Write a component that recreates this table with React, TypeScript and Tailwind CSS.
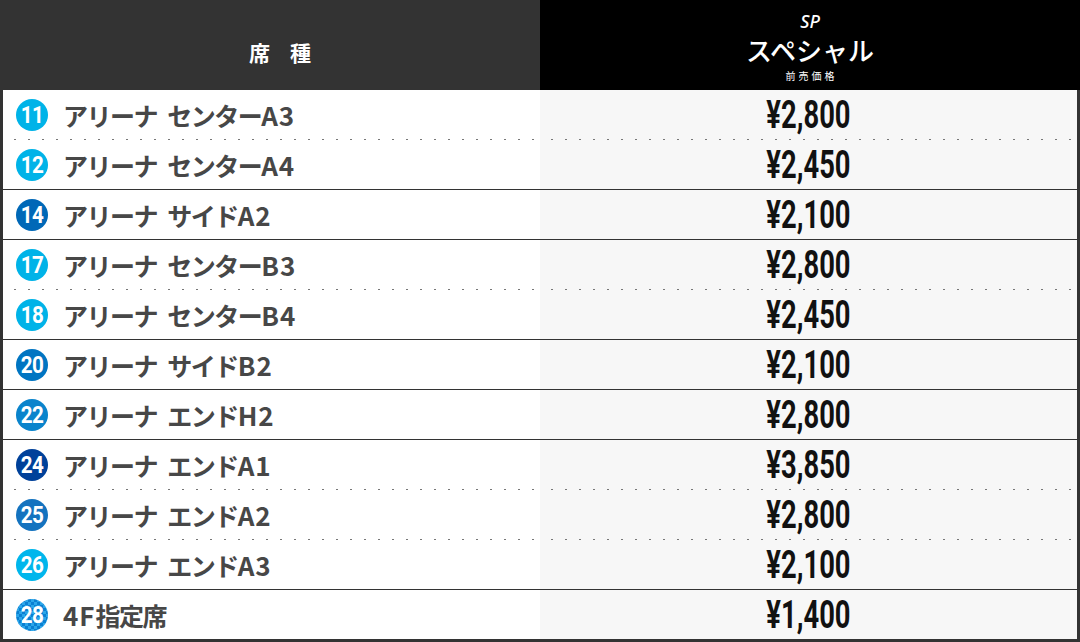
import React from 'react';

type Seat = {
  no: string;
  // [text, isLatin]
  name: [string, boolean][];
  price: string;
  color: string;
  // line drawn below this row
  sep: 'solid' | 'dotted' | 'none';
};

const seats: Seat[] = [
  { no: '11', name: [['アリーナ センター', false], ['A3', true]], price: '¥2,800', color: 'bg-[#00b3e8]', sep: 'dotted' },
  { no: '12', name: [['アリーナ センター', false], ['A4', true]], price: '¥2,450', color: 'bg-[#00b3e8]', sep: 'solid' },
  { no: '14', name: [['アリーナ サイド', false], ['A2', true]], price: '¥2,100', color: 'bg-[#0068b7]', sep: 'solid' },
  { no: '17', name: [['アリーナ センター', false], ['B3', true]], price: '¥2,800', color: 'bg-[#00b3e8]', sep: 'dotted' },
  { no: '18', name: [['アリーナ センター', false], ['B4', true]], price: '¥2,450', color: 'bg-[#00b3e8]', sep: 'solid' },
  { no: '20', name: [['アリーナ サイド', false], ['B2', true]], price: '¥2,100', color: 'bg-[#0075c2]', sep: 'solid' },
  { no: '22', name: [['アリーナ エンド', false], ['H2', true]], price: '¥2,800', color: 'bg-[#0a84cc]', sep: 'solid' },
  { no: '24', name: [['アリーナ エンド', false], ['A1', true]], price: '¥3,850', color: 'bg-[#00419a]', sep: 'dotted' },
  { no: '25', name: [['アリーナ エンド', false], ['A2', true]], price: '¥2,800', color: 'bg-[#1473bf]', sep: 'dotted' },
  { no: '26', name: [['アリーナ エンド', false], ['A3', true]], price: '¥2,100', color: 'bg-[#00b6ec]', sep: 'solid' },
  {
    no: '28',
    name: [['4F', true], ['指定席', false]],
    price: '¥1,400',
    color:
      'bg-[#0a80d2] bg-[conic-gradient(#2aa6ea_25%,#0a80d2_0_50%,#2aa6ea_0_75%,#0a80d2_0)] bg-[length:6px_6px]',
    sep: 'none',
  },
];

const jp = "font-['Noto_Sans_CJK_JP','Noto_Sans',sans-serif]";

function Badge({ no, color }: { no: string; color: string }) {
  return (
    <div className={`w-8 h-8 rounded-full flex items-center justify-center shrink-0 ${color}`}>
      <span className="inline-block text-white font-bold text-[24px] leading-none tracking-[-0.8px] scale-x-[0.86] font-['Roboto',sans-serif]">
        {no}
      </span>
    </div>
  );
}

function Separator({ kind }: { kind: Seat['sep'] }) {
  if (kind === 'none') return null;
  if (kind === 'solid') return <div className="h-px bg-[#333]" />;
  return (
    <div className="h-px flex">
      <div className="w-[537px] bg-white flex">
        <div className="ml-[11px] flex-1 bg-[linear-gradient(to_right,#777_2px,transparent_2px)] bg-[length:14px_1px]" />
      </div>
      <div className="flex-1 bg-[#f7f7f7] flex">
        <div className="mr-[4px] flex-1 bg-[linear-gradient(to_right,#777_2px,transparent_2px)] bg-[length:14px_1px] bg-[position:11px_0]" />
      </div>
    </div>
  );
}

export default function App() {
  return (
    <div className="w-[1080px] h-[642px] flex flex-col bg-[#333]">
      {/* Header */}
      <div className="h-[90px] flex shrink-0">
        <div className={`w-[540px] bg-[#333] flex items-center justify-center gap-5 pl-5 pt-[16px] ${jp} text-white font-bold text-[21px]`}>
          <span>席</span>
          <span>種</span>
        </div>
        <div className="flex-1 bg-black flex flex-col items-center pt-[10px]">
          <span className="text-white italic font-medium text-[18px] leading-[22px] font-['Noto_Sans',sans-serif]">
            SP
          </span>
          <span className={`${jp} text-white font-medium text-[26px] leading-[30px] mt-[3px]`}>
            スペシャル
          </span>
          <span className={`${jp} text-white text-[10px] leading-[12px] tracking-[0.3em] pl-[0.3em] mt-[5px]`}>
            前売価格
          </span>
        </div>
      </div>

      {/* Body */}
      <div className="flex-1 flex flex-col mx-[3px] mb-[3px]">
        {seats.map((s) => (
          <React.Fragment key={s.no}>
            <div className="h-[49px] flex shrink-0">
              <div className="w-[537px] bg-white flex items-center pl-[13px] gap-[15px]">
                <Badge no={s.no} color={s.color} />
                <span className={`${jp} font-bold text-[25px] leading-none text-[#474747] whitespace-pre`}>
                  {s.name.map(([t, latin], i) =>
                    latin ? (
                      <span key={i} className="text-[26px] tracking-[1px]">
                        {t}
                      </span>
                    ) : (
                      <span key={i} className="tracking-[-1.5px] [word-spacing:6px]">
                        {t}
                      </span>
                    )
                  )}
                </span>
              </div>
              <div className="flex-1 bg-[#f7f7f7] flex items-center justify-center">
                <span className="inline-block scale-x-[0.72] font-['Roboto',sans-serif] font-bold text-[38px] leading-none text-[#111]">
                  {s.price}
                </span>
              </div>
            </div>
            <Separator kind={s.sep} />
          </React.Fragment>
        ))}
      </div>
    </div>
  );
}
